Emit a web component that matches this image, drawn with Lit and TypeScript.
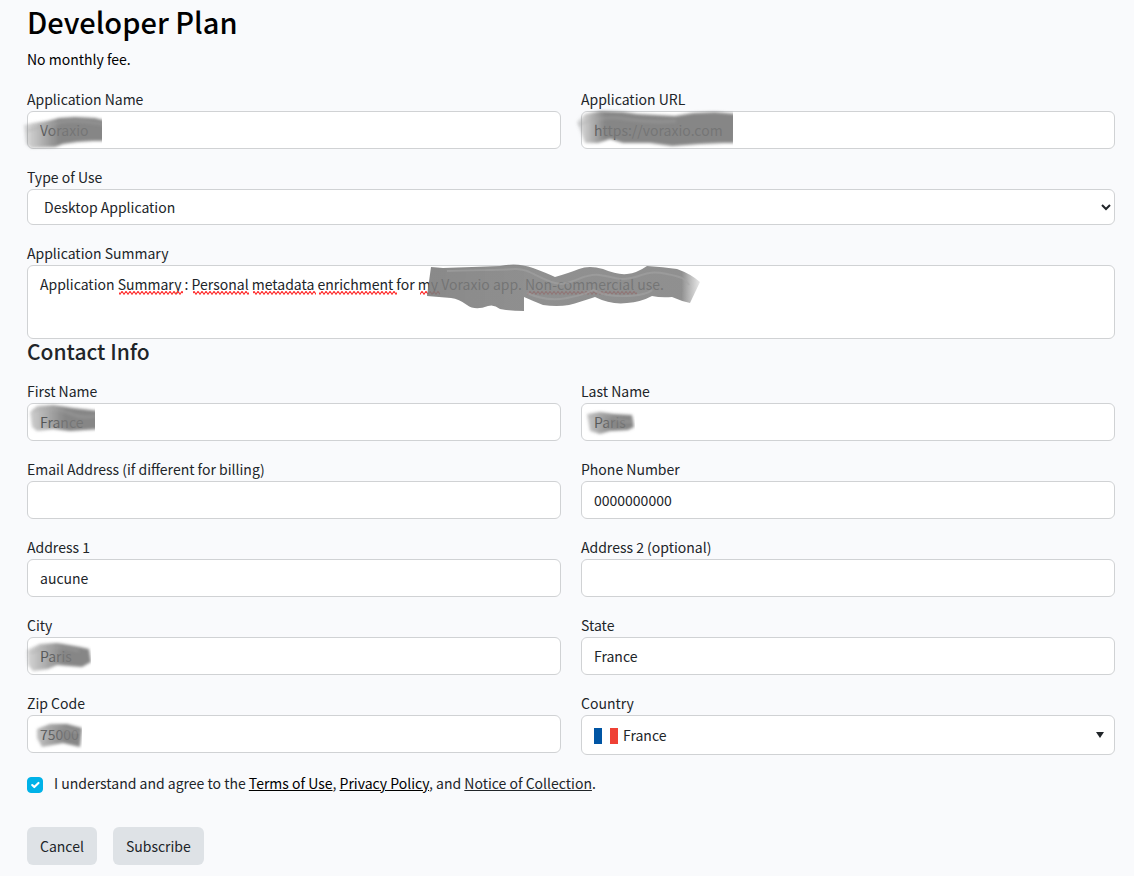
import { LitElement, html, css, svg, nothing } from "lit";
import { customElement } from "lit/decorators.js";

interface Smear {
  points: string;
  edge: number; // x where the brush stroke ends abruptly
  fade: number; // width of the soft start at the left
  streak: string;
}

interface Field {
  id: string;
  label: string;
  value?: string;
  type?: string;
  smear?: Smear;
}

const appFields: Field[] = [
  {
    id: "app-name",
    label: "Application Name",
    value: "Voraxio",
    smear: {
      points: "-3,14 6,12 20,10 32,7 48,6 68,7 80,10 80,30 66,30 50,31 36,33 28,36 4,37 -1,33",
      edge: 75,
      fade: 32,
      streak: "M0 20Q20 14 34 11T80 14",
    },
  },
  {
    id: "app-url",
    label: "Application URL",
    value: "https://voraxio.com",
    smear: {
      points:
        "-4,11 4,3 19,0 42,1 56,3 94,5 112,2 134,1 156,3 154,32 142,32 119,33 91,35 69,32 42,32 29,28 17,32 4,32",
      edge: 152,
      fade: 24,
      streak: "M-2 14Q20 4 45 8T95 10",
    },
  },
];

const contactFields: Field[] = [
  {
    id: "first",
    label: "First Name",
    value: "France",
    smear: {
      points: "3,9 10,3 26,2 46,5 74,8 74,26 43,28 26,26 10,28 5,24",
      edge: 68,
      fade: 38,
      streak: "M6 8Q26 3 42 10T74 12",
    },
  },
  {
    id: "last",
    label: "Last Name",
    value: "Paris",
    smear: {
      points: "6,11 19,9 32,11 51,12 53,24 47,27 29,28 19,31 9,28",
      edge: 54,
      fade: 32,
      streak: "M8 14Q22 10 34 15T52 18",
    },
  },
  { id: "email", label: "Email Address (if different for billing)", type: "email" },
  { id: "phone", label: "Phone Number", value: "0000000000", type: "tel" },
  { id: "addr1", label: "Address 1", value: "aucune" },
  { id: "addr2", label: "Address 2 (optional)" },
  {
    id: "city",
    label: "City",
    value: "Paris",
    smear: {
      points: "0,13 13,7 30,6 53,10 62,12 64,25 55,30 30,28 21,32 6,34 1,28",
      edge: 64,
      fade: 36,
      streak: "M4 16Q28 6 52 14",
    },
  },
  { id: "state", label: "State", value: "France" },
  {
    id: "zip",
    label: "Zip Code",
    value: "75000",
    smear: {
      points: "10,14 23,9 40,9 55,13 53,32 36,28 15,32 10,23",
      edge: 55,
      fade: 38,
      streak: "M12 16Q28 9 40 14T54 16",
    },
  },
];

// Misspelled word ranges in the summary, as [start, end] in pixels.
const misspelled = [
  [92, 156],
  [166, 222],
  [226, 289],
  [292, 370],
  [393, 413],
  [500, 610],
];

@customElement("app-root")
export class AppRoot extends LitElement {
  static styles = css`
    :host {
      display: block;
      min-height: 100vh;
      box-sizing: border-box;
      padding: 3px 19px 11px 27px;
      background: #f9fafc;
      color: #212529;
      font: 14px/24px "Source Sans Pro", "Noto Sans CJK SC", sans-serif;
    }
    *, *::before { box-sizing: border-box; }
    h1, h2, p { margin: 0; }
    h1 { font-size: 29px; line-height: 36px; font-weight: 500; color: #000; padding-bottom: 8px; }
    h2 { font-size: 21px; line-height: 24px; font-weight: 500; padding-bottom: 16px; }
    .fee { color: #000; padding-bottom: 16px; }
    .grid { display: grid; grid-template-columns: 1fr 1fr; column-gap: 20px; row-gap: 16px; }
    .stack { display: grid; row-gap: 16px; padding-top: 16px; }
    .field { display: flex; flex-direction: column; }
    .box { position: relative; display: flex; }
    .control {
      width: 100%;
      height: 38px;
      margin: 0;
      padding: 6px 12px;
      border: 1px solid #d0d2d4;
      border-radius: 6px;
      background-color: #fff;
      color: #212529;
      font: inherit;
      outline: none;
    }
    .type { height: 36px; padding: 0 12px; }
    .summary { height: 74px; resize: none; display: block; }
    .country { height: 40px; padding: 0 12px 0 41px; appearance: none; }
    .overlay { position: absolute; left: 0; top: 0; width: 100%; height: 100%; overflow: visible; pointer-events: none; }
    .flag { position: absolute; left: 13px; top: 13px; width: 24px; height: 16px; pointer-events: none; }
    .caret { position: absolute; right: 11px; top: 17px; width: 8px; height: 6px; pointer-events: none; }
    .agree { display: flex; align-items: center; gap: 11px; padding-top: 16px; }
    .tick {
      appearance: none;
      flex: none;
      width: 16px;
      height: 16px;
      margin: 3px 0 0;
      border-radius: 4px;
      border: 1px solid #ced4da;
      background: #fff;
    }
    .tick:checked {
      border-color: #00b2e8;
      background: #00b2e8 url("data:image/svg+xml,%3Csvg xmlns='http://www.w3.org/2000/svg' viewBox='0 0 20 20'%3E%3Cpath fill='none' stroke='%23fff' stroke-linecap='round' stroke-linejoin='round' stroke-width='3' d='m6 10 3 3 6-6'/%3E%3C/svg%3E") center / 14px no-repeat;
    }
    a { color: inherit; text-decoration: underline; }
    .strong { color: #000; }
    .actions { display: flex; gap: 16px; padding-top: 32px; }
    .btn {
      height: 38px;
      padding: 6px 13px;
      border: 0;
      border-radius: 6px;
      background: #dee2e6;
      color: #212529;
      font: inherit;
    }
  `;

  private smear(id: string, s: Smear) {
    return html`<svg class="overlay" aria-hidden="true">
      ${svg`<defs>
        <linearGradient id="g-${id}" gradientUnits="userSpaceOnUse" x1="0" x2=${s.fade} y1="0" y2="0">
          <stop offset="0" stop-color="#777" stop-opacity="0.3"></stop>
          <stop offset="1" stop-color="#7c7c7c" stop-opacity="0.92"></stop>
        </linearGradient>
        <filter id="b-${id}" x="-20%" y="-30%" width="140%" height="160%"><feGaussianBlur stdDeviation="1.4"></feGaussianBlur></filter>
        <clipPath id="c-${id}"><rect x="-10" y="-6" width=${s.edge + 10} height="60"></rect></clipPath>
      </defs>
      <g clip-path="url(#c-${id})" filter="none">
        <polygon points=${s.points} fill="url(#g-${id})" filter="url(#b-${id})"></polygon>
        <path d=${s.streak} fill="none" stroke="#aaa" stroke-opacity=".45" stroke-width="2" filter="url(#b-${id})"></path>
      </g>`}
    </svg>`;
  }

  private field(f: Field) {
    return html`<div class="field">
      <label for=${f.id}>${f.label}</label>
      <div class="box">
        <input class="control" id=${f.id} type=${f.type ?? "text"} .value=${f.value ?? ""} />
        ${f.smear ? this.smear(f.id, f.smear) : nothing}
      </div>
    </div>`;
  }

  render() {
    return html`
      <h1>Developer Plan</h1>
      <p class="fee">No monthly fee.</p>
      <form @submit=${(e: Event) => e.preventDefault()}>
        <div class="grid">${appFields.map((f) => this.field(f))}</div>
        <div class="stack">
          <div class="field">
            <label for="use">Type of Use</label>
            <select class="control type" id="use">
              <option>Desktop Application</option>
            </select>
          </div>
          <div class="field">
            <label for="summary">Application Summary</label>
            <div class="box">
              <textarea
                class="control summary"
                id="summary"
                spellcheck="false"
                .value=${"Application Summary : Personal metadata enrichment for my Voraxio app. Non-commercial use."}
              ></textarea>
              <svg class="overlay" aria-hidden="true">
                <defs>
                  <pattern id="wave" width="4" height="4" y="26" patternUnits="userSpaceOnUse">
                    <path d="M-1 0 1 3 3 0 5 3" transform="translate(0 .3)" fill="none" stroke="#f33" stroke-width="1.1" />
                  </pattern>
                  <linearGradient id="g-sum" gradientUnits="userSpaceOnUse" x1="400" x2="674" y1="0" y2="4">
                    <stop offset="0" stop-color="#7c7c7c" stop-opacity=".9" />
                    <stop offset=".36" stop-color="#808080" stop-opacity=".88" />
                    <stop offset=".93" stop-color="#808080" stop-opacity=".88" />
                    <stop offset="1" stop-color="#888" stop-opacity=".15" />
                  </linearGradient>
                  <filter id="b-sum"><feGaussianBlur stdDeviation=".6" /></filter>
                </defs>
                ${misspelled.map(
                  ([a, b]) => svg`<rect x=${a} y="26" width=${b - a} height="4" fill="url(#wave)"></rect>`
                )}
                <path
                  filter="url(#b-sum)"
                  fill="url(#g-sum)"
                  d="M404 2 416 3 445 2 473 1Q490 -3 506 3T528 12Q542 8 552 4T576 4Q590 10 600 9T620 1Q636 2 650 4Q664 9 673 17L663 38Q654 36 645 32Q634 33 625 31Q614 37 600 38Q584 40 568 32Q553 37 542 40Q530 42 516 40Q506 36 497 32V46Q485 46 473 44Q467 39 461 41Q448 46 440 40T424 33L400 31Z"
                />
                <g filter="url(#b-sum)" fill="none" stroke="#a4a4a4" stroke-opacity=".55" stroke-width="2">
                  <path d="M420 6C450 5 475 5 488 4S512 14 528 18S555 8 572 10S590 16 604 13S620 5 640 9S658 15 662 20" />
                  <path d="M500 28Q520 37 540 33T566 25Q580 32 600 31T625 25" />
                </g>
              </svg>
            </div>
          </div>
        </div>
        <h2>Contact Info</h2>
        <div class="grid">
          ${contactFields.map((f) => this.field(f))}
          <div class="field">
            <label for="country">Country</label>
            <div class="box">
              <select class="control country" id="country">
                <option>France</option>
              </select>
              <svg class="flag" viewBox="0 0 24 16" aria-hidden="true">
                <rect width="24" height="16" fill="#fff" />
                <rect width="8" height="16" fill="#0055a4" />
                <rect x="16" width="8" height="16" fill="#ef4135" />
              </svg>
              <svg class="caret" viewBox="0 0 8 6" aria-hidden="true"><path d="M0 0h8L4 6z" fill="#212529" /></svg>
            </div>
          </div>
        </div>
        <div class="agree">
          <input class="tick" id="agree" type="checkbox" checked />
          <label for="agree"
            >I understand and agree to the <a class="strong" href="#terms">Terms of Use</a>,
            <a class="strong" href="#privacy">Privacy Policy</a>, and
            <a href="#notice">Notice of Collection</a>.</label
          >
        </div>
        <div class="actions">
          <button class="btn" type="button">Cancel</button>
          <button class="btn" type="submit">Subscribe</button>
        </div>
      </form>
    `;
  }
}
